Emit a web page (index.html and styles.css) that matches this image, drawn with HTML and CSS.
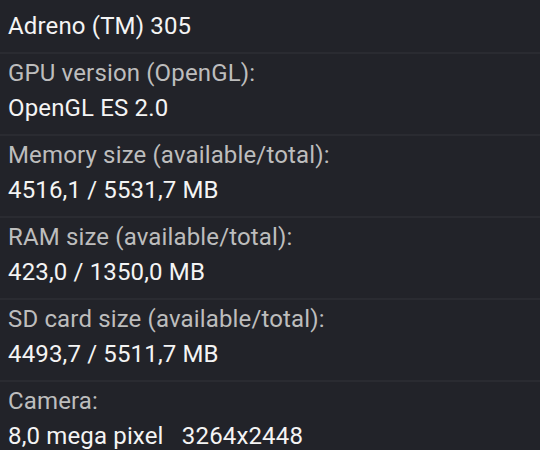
FILE: index.html
```html
<!DOCTYPE html>
<html>
<head>
<meta charset="utf-8">
<link rel="stylesheet" href="styles.css">
</head>
<body>
<div class="list">
  <div class="row"><div class="label">GPU renderer:</div><div class="value">Adreno (TM) 305</div></div>
  <div class="row"><div class="label">GPU version (OpenGL):</div><div class="value">OpenGL ES 2.0</div></div>
  <div class="row"><div class="label">Memory size (available/total):</div><div class="value">4516,1 / 5531,7 MB</div></div>
  <div class="row"><div class="label">RAM size (available/total):</div><div class="value">423,0 / 1350,0 MB</div></div>
  <div class="row"><div class="label">SD card size (available/total):</div><div class="value">4493,7 / 5511,7 MB</div></div>
  <div class="row"><div class="label">Camera:</div><div class="value">8,0 mega pixel   3264x2448</div></div>
</div>
</body>
</html>
```
FILE: styles.css
```css
html, body {
  margin: 0;
  padding: 0;
  background: #222329;
  overflow: hidden;
  height: 450px;
}
.list {
  margin-top: -30px;
  display: flex;
  flex-direction: column;
  font-family: Roboto, "Noto Sans", sans-serif;
  font-size: 24px;
  line-height: 35px;
  letter-spacing: 0.15px;
}
.row {
  border-top: 2px solid #2a2b31;
  padding: 2px 8px 8px 8px;
}
.label {
  color: #bdbdbd;
}
.value {
  color: #f4f4f4;
  white-space: pre;
}
```
